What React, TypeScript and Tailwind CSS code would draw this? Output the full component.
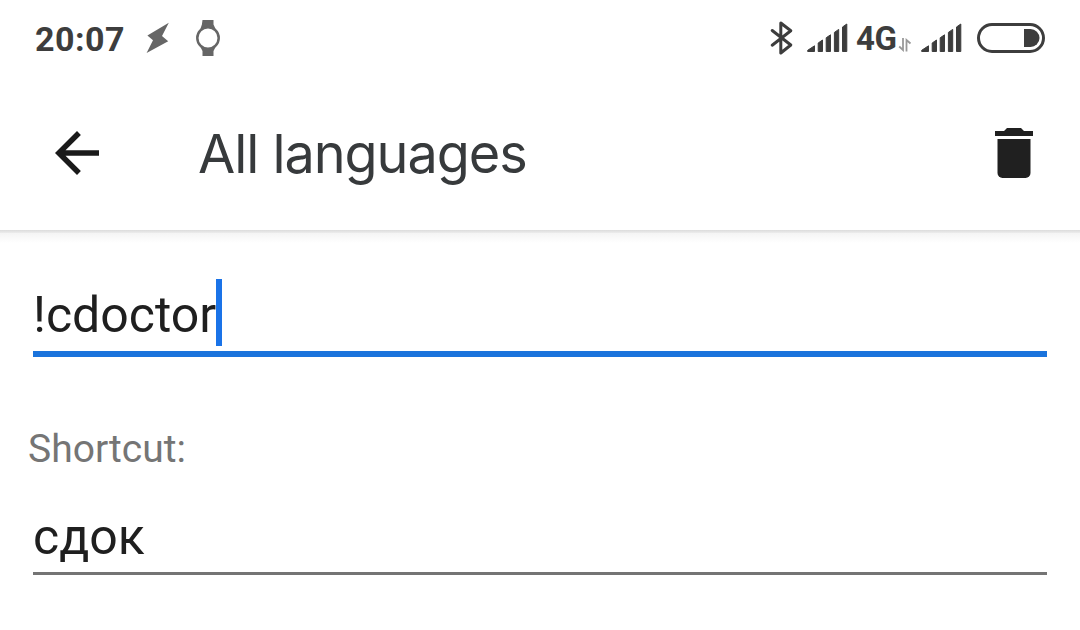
import React from 'react';

const SignalBars: React.FC<{ className?: string }> = ({ className = '' }) => (
  <svg className={`shrink-0 ${className}`} width="41" height="30" viewBox="0 0 41 30" fill="#3d3d3d" stroke="#3d3d3d" strokeWidth="1" strokeLinejoin="round">
    <path d="M.7 28.5 V27.3 L7.5 22.8 V28.5 Z" />
    <path d="M11.2 28.5 V20 L15.5 17 V28.5 Z" />
    <path d="M19.2 28.5 V14.8 L23.5 11.8 V28.5 Z" />
    <path d="M27.4 28.5 V9.4 L31.7 6.4 V28.5 Z" />
    <path d="M35.5 28.5 V4 L39.8 1 V28.5 Z" />
  </svg>
);

const StatusBar: React.FC = () => (
  <div className="flex h-[76px] items-center px-[35px] text-[#3d3d3d]">
    <span className="w-[90px] pt-px text-[34px] leading-none font-bold tracking-[0.5px] whitespace-nowrap">20:07</span>
    <svg className="ml-[20px] shrink-0" width="26" height="34" viewBox="0 0 26 34" fill="#666">
      <path d="M23.8 1.8 L2.4 14.5 L8 19.2 L1.6 32 L23.2 20.2 L17 15 Z" />
    </svg>
    <svg className="ml-[24px] shrink-0" width="26" height="38" viewBox="0 0 26 38">
      <path d="M7.5 1h11v4.5l2.3 5h-15.6l1.7-5zM5.2 27.5h15.6l-2.3 4.5v5h-11v-5z" fill="#666" />
      <circle cx="13" cy="19" r="10.7" fill="#fff" stroke="#666" strokeWidth="2.5" />
    </svg>

    <div className="ml-auto flex items-center">
      <svg className="shrink-0" width="24" height="36" viewBox="0 0 24 36" fill="none" stroke="#3d3d3d" strokeWidth="3" strokeLinejoin="round" strokeLinecap="round">
        <path d="M2.2 10.5 L20.8 25 L10.8 33 V3 L20.8 10.8 L2.2 25.2" />
      </svg>
      <SignalBars className="ml-[13px]" />
      <span className="ml-[8px] w-[42px] text-[33px] leading-none font-bold tracking-[-0.5px] whitespace-nowrap">4G</span>
      <svg className="mt-[13px] shrink-0" width="15" height="14" viewBox="0 0 15 14" fill="none" stroke="#999" strokeWidth="1.8">
        <path d="M5 0 V12 L1.2 8.5" />
        <path d="M8.5 13.5 V2 L12.5 5.5" />
      </svg>
      <SignalBars className="ml-[8px]" />
      <svg className="ml-[14px] shrink-0" width="69" height="30" viewBox="0 0 69 30">
        <rect x="2.5" y="1.5" width="65" height="27" rx="13.5" fill="none" stroke="#3d3d3d" strokeWidth="3" />
        <path d="M48 6h6.5a9 9 0 0 1 0 18H48z" fill="#3d3d3d" />
      </svg>
    </div>
  </div>
);

const Header: React.FC = () => (
  <header className="flex h-[154px] items-center pl-[44px] pr-[34px]">
    <button aria-label="Back" className="shrink-0">
      <svg width="66" height="66" viewBox="0 0 24 24" fill="#1a1a1a">
        <path d="M20 11H7.83l5.59-5.59L12 4l-8 8 8 8 1.41-1.41L7.83 13H20z" />
      </svg>
    </button>
    <h1 className="ml-[88px] pt-px font-['Inter',sans-serif] text-[54px] leading-none tracking-[-1.05px] whitespace-nowrap text-[#373a3c]">All languages</h1>
    <button aria-label="Delete" className="ml-auto shrink-0 pr-[12px]">
      <svg width="40" height="52" viewBox="0 0 40 52" fill="#202020">
        <path d="M1 4h9l3-3h14l3 3h9v5H1z" />
        <path d="M3.5 12h33v34a5 5 0 0 1-5 5h-23a5 5 0 0 1-5-5z" />
      </svg>
    </button>
  </header>
);

const App: React.FC = () => (
  <div className="h-[630px] w-[1080px] overflow-hidden bg-white font-['Roboto',sans-serif]">
    <StatusBar />
    <Header />
    {/* header elevation */}
    <div className="h-[3px] bg-linear-to-b from-[#dcdcdc] to-[#ececec]" />
    <div className="h-[10px] bg-linear-to-b from-[#f4f4f4] to-white" />
    <main className="px-[33px] pt-[36px]">
      <div className="flex h-[78px] items-start border-b-[6px] border-[#1a73dc]">
        <span className="text-[50px] leading-[73px] text-[#1f1f1f]">!cdoctor</span>
        <span className="h-[67px] w-[6px] bg-[#1a73e8]" />
      </div>
      <p className="mt-[68px] -ml-[5px] text-[39px] leading-[48px] text-[#757575]">Shortcut:</p>
      <div className="mt-[28px] h-[74px] border-b-[3px] border-[#747474] text-[50px] leading-[72px] text-[#1f1f1f]">сдок</div>
    </main>
  </div>
);

export default App;
